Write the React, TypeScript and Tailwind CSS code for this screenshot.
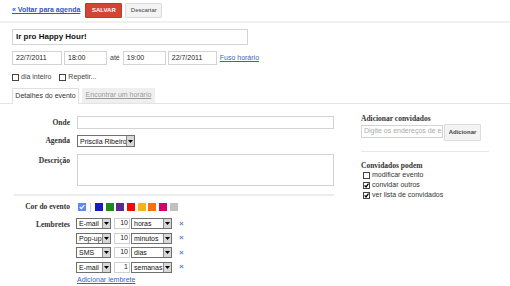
import React from "react";

function Arrow() {
  return (
    <div className="w-[8px] h-full bg-[#d8d8d8] border-l border-[#8a8a8a] flex items-center justify-center shrink-0">
      <svg width="5" height="3" viewBox="0 0 5 3">
        <path d="M0 0H5L2.5 3Z" fill="#000" />
      </svg>
    </div>
  );
}

function Select({ text, className }: { text: string; className: string }) {
  return (
    <div className={`flex items-stretch border border-[#6f6f6f] bg-white ${className}`}>
      <div className="flex-1 flex items-center pl-[2px] leading-none overflow-hidden whitespace-nowrap text-[#111]">
        {text}
      </div>
      <Arrow />
    </div>
  );
}

function Check({ checked }: { checked?: boolean }) {
  return (
    <div className="w-[7px] h-[7px] border border-[#444] bg-white flex items-center justify-center shrink-0">
      {checked && (
        <svg width="5" height="5" viewBox="0 0 5 5">
          <path d="M0.6 2.4L2 3.9L4.5 0.6" stroke="#000" strokeWidth="1.3" fill="none" />
        </svg>
      )}
    </div>
  );
}

function Input({ text, className }: { text: string; className: string }) {
  return (
    <div className={`border border-[#d3d3d3] bg-white flex items-center pl-[3px] text-[#222] ${className}`}>
      {text}
    </div>
  );
}

const labelCls =
  "w-[58px] shrink-0 text-right font-['Liberation_Serif',serif] font-bold text-[7.5px] text-[#333]";

function Reminder({ type, num, unit }: { type: string; num: string; unit: string }) {
  return (
    <div className="flex items-center h-[11px]">
      <Select text={type} className="w-[35px] h-[11px] ml-[-1px]" />
      <div className="ml-[3px] w-[16px] h-[11px] border border-[#d0d0d0] flex items-center justify-end pr-[1px] text-[#222]">
        {num}
      </div>
      <Select text={unit} className="ml-[1px] w-[41px] h-[11px]" />
      <span className="ml-[7px] text-[#5b7fd8] text-[8px] font-bold leading-none">×</span>
    </div>
  );
}

export default function App() {
  const swatches = [
    "bg-[#1a1ac4]",
    "bg-[#1e8a1e]",
    "bg-[#5a2a90]",
    "bg-[#f00a0a]",
    "bg-[#f6b414]",
    "bg-[#ff6e0a]",
    "bg-[#d4006c]",
    "bg-[#c0c0c0]",
  ];
  return (
    <div className="w-[510px] h-[286px] bg-white text-[7px] text-[#222] font-['Liberation_Sans',Arial,sans-serif] flex flex-col overflow-hidden">
      {/* top bar */}
      <div className="h-[23px] border-b-2 border-[#f0f0f0] flex items-center pl-[12px] shrink-0">
        <a className="text-[#2d58c8] underline font-bold text-[7px]">« Voltar para agenda</a>
        <div className="ml-[5px] w-[37px] h-[15px] bg-[#d44434] border border-[#c23727] rounded-[1px] text-white font-bold text-[6px] flex items-center justify-center">
          SALVAR
        </div>
        <div className="ml-[3px] w-[37px] h-[15px] bg-[#f3f3f3] border border-[#dadada] rounded-[1px] text-[#444] text-[6px] flex items-center justify-center">
          Descartar
        </div>
      </div>

      {/* header */}
      <div className="pl-[12px]">
        <div className="mt-[6px] w-[236px] h-[16px] border border-[#d3d3d3] flex items-center pl-[3px] font-bold text-[8px] text-[#111]">
          Ir pro Happy Hour!
        </div>
        <div className="mt-[6px] flex items-center h-[14px]">
          <Input text="22/7/2011" className="w-[50px] h-[14px]" />
          <Input text="18:00" className="ml-[2px] w-[43px] h-[14px]" />
          <span className="ml-[3px] text-[#444]">até</span>
          <Input text="19:00" className="ml-[3px] w-[43px] h-[14px]" />
          <Input text="22/7/2011" className="ml-[2px] w-[49px] h-[14px]" />
          <a className="ml-[3px] text-[#3a63c9] underline">Fuso horário</a>
        </div>
        <div className="mt-[8px] flex items-center h-[8px] text-[#444]">
          <Check />
          <span className="ml-[2px]">dia inteiro</span>
          <div className="ml-[8px]">
            <Check />
          </div>
          <span className="ml-[2px]">Repetir...</span>
        </div>
      </div>

      {/* tabs */}
      <div className="mt-[7px] pl-[12px] flex items-end border-b border-[#e4e4e4] h-[16px]">
        <div className="w-[67px] h-[16px] bg-white border border-b-0 border-[#e0e0e0] -mb-px flex items-center justify-center text-[#333]">
          Detalhes do evento
        </div>
        <div className="ml-[3px] w-[73px] h-[15px] bg-[#efefef] flex items-center justify-center text-[#9a9a9a] underline">
          Encontrar um horário
        </div>
      </div>

      {/* body */}
      <div className="flex flex-1">
        <div className="pl-[12px] w-[336px] pt-[12px] flex flex-col">
          <div className="flex items-center h-[13px]">
            <div className={labelCls}>Onde</div>
            <div className="ml-[7px] w-[257px] h-[13px] border border-[#d3d3d3]" />
          </div>
          <div className="flex items-center h-[12px] mt-[6px]">
            <div className={labelCls}>Agenda</div>
            <Select text="Priscila Ribeiro" className="ml-[7px] w-[58px] h-[12px]" />
          </div>
          <div className="flex items-start mt-[7px]">
            <div className={`${labelCls} pt-[1px]`}>Descrição</div>
            <div className="ml-[7px] w-[257px] h-[32px] border border-[#d3d3d3]" />
          </div>
          <div className="mt-[8px] ml-[2px] w-[320px] h-[2px] bg-[#ececec]" />
          <div className="flex items-center h-[8px] mt-[7px]">
            <div className={labelCls}>Cor do evento</div>
            <div className="ml-[8px] flex items-center">
              <div className="w-[8px] h-[8px] bg-[#5f8be8] flex items-center justify-center">
                <svg width="6" height="6" viewBox="0 0 6 6">
                  <path d="M0.8 3L2.4 4.6L5.3 1.2" stroke="#fff" strokeWidth="1.2" fill="none" />
                </svg>
              </div>
              <div className="ml-[4px] w-px h-[9px] bg-[#cccccc]" />
              <div className="ml-[4px] flex items-center gap-[2.7px]">
                {swatches.map((c, i) => (
                  <div key={i} className={`w-[8px] h-[8px] ${c}`} />
                ))}
              </div>
            </div>
          </div>
          <div className="flex items-start mt-[7px]">
            <div className={`${labelCls} pt-[1px]`}>Lembretes</div>
            <div className="ml-[7px] flex flex-col gap-[3.5px]">
              <Reminder type="E-mail" num="10" unit="horas" />
              <Reminder type="Pop-up" num="10" unit="minutos" />
              <Reminder type="SMS" num="10" unit="dias" />
              <Reminder type="E-mail" num="1" unit="semanas" />
              <a className="text-[#3a63c9] underline mt-[-1px]">Adicionar lembrete</a>
            </div>
          </div>
        </div>

        <div className="ml-[25px] w-[128px] pt-[10px] flex flex-col">
          <div className="font-['Liberation_Serif',serif] font-bold text-[7.5px] text-[#333] h-[10px] leading-[10px]">
            Adicionar convidados
          </div>
          <div className="flex items-start">
            <div className="mt-[1px] w-[82px] h-[13px] border border-[#d3d3d3] flex items-center pl-[2px] text-[#aaa] overflow-hidden">
              <span className="block w-[78px] overflow-hidden whitespace-nowrap">Digite os endereços de e-r</span>
            </div>
            <div className="ml-[1px] w-[37px] h-[17px] bg-[#f3f3f3] border border-[#dcdcdc] rounded-[1px] flex items-center justify-center text-[6px] font-bold text-[#444]">
              Adicionar
            </div>
          </div>
          <div className="mt-[10px] w-[128px] h-px bg-[#e8e8e8]" />
          <div className="mt-[9px] font-['Liberation_Serif',serif] font-bold text-[7.5px] text-[#333] h-[10px] leading-[10px]">
            Convidados podem
          </div>
          <div className="flex flex-col pl-[2px] gap-[2px] text-[#333]">
            <div className="flex items-center h-[8px]">
              <Check />
              <span className="ml-[2px]">modificar evento</span>
            </div>
            <div className="flex items-center h-[8px]">
              <Check checked />
              <span className="ml-[2px]">convidar outros</span>
            </div>
            <div className="flex items-center h-[8px]">
              <Check checked />
              <span className="ml-[2px]">ver lista de convidados</span>
            </div>
          </div>
        </div>
      </div>

      <div className="h-[2px] bg-[#e6e6e6] shrink-0" />
    </div>
  );
}
